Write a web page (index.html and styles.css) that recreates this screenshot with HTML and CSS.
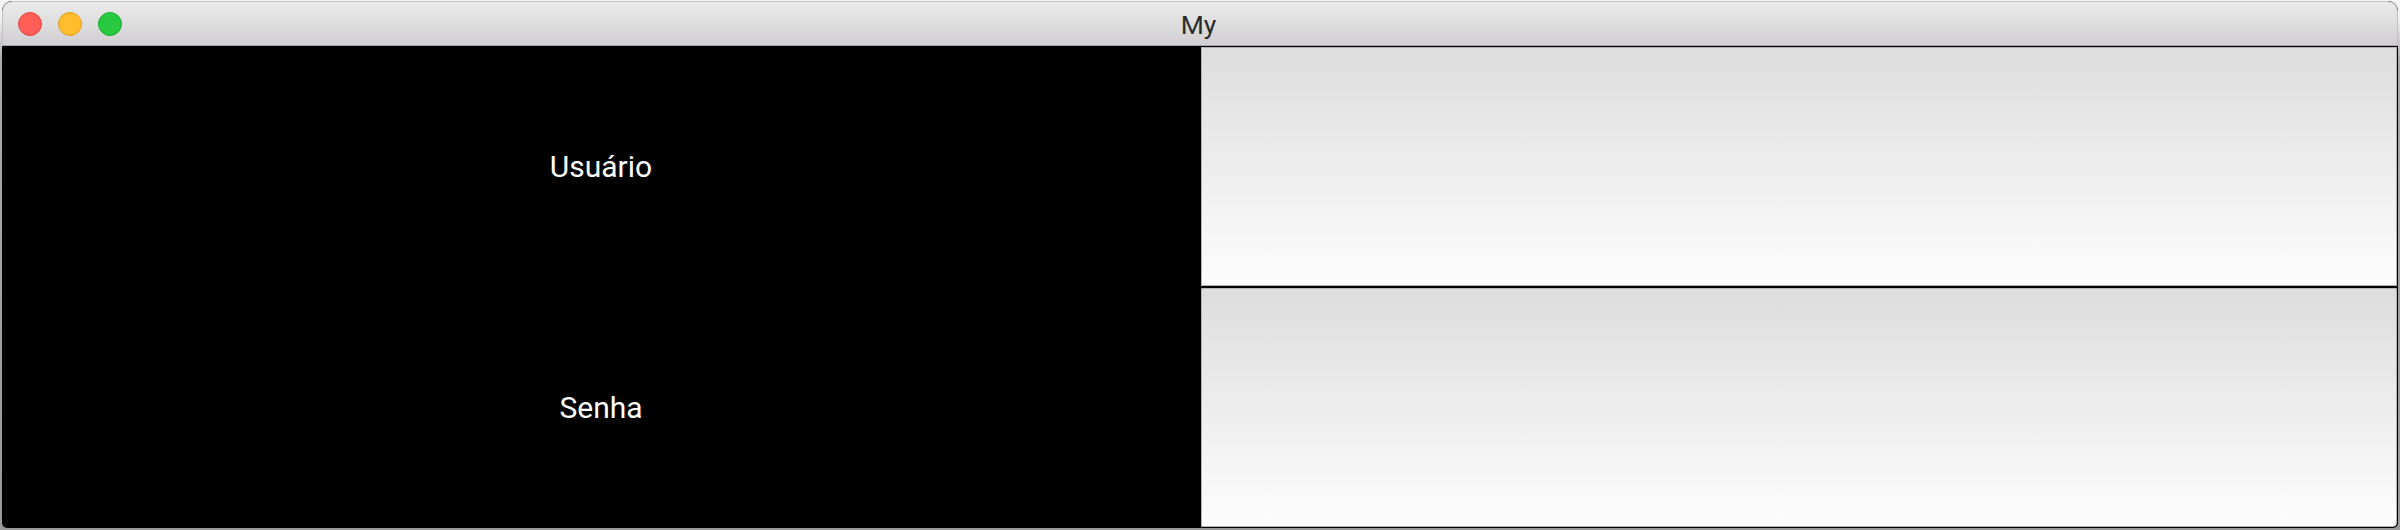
FILE: index.html
```html
<!DOCTYPE html>
<html lang="pt">
<head>
<meta charset="utf-8">
<title>My</title>
<link rel="stylesheet" href="styles.css">
</head>
<body>
<div class="window">
  <header class="titlebar">
    <div class="controls">
      <span class="dot close"></span>
      <span class="dot minimize"></span>
      <span class="dot zoom"></span>
    </div>
    <h1 class="title">My</h1>
  </header>
  <main class="form">
    <label class="label" for="user"><span>Usuário</span></label>
    <input class="field" id="user" type="text">
    <label class="label" for="password"><span>Senha</span></label>
    <input class="field" id="password" type="password">
  </main>
</div>
</body>
</html>
```

FILE: styles.css
```css
* { box-sizing: border-box; }
body {
  margin: 0;
  height: 530px;
  padding: 1px 2px 2px;
  overflow: hidden;
  background: linear-gradient(#f5f5f5 0, #f0f0f0 20px, #aaa 60px, #999 100%);
  font-family: Roboto, "Liberation Sans", sans-serif;
}
.window {
  height: 527px;
  display: flex;
  flex-direction: column;
  overflow: hidden;
  border-radius: 10px 10px 5px 5px;
  background: #000;
}
.titlebar {
  height: 45px;
  flex: none;
  display: grid;
  grid-template-columns: 1fr auto 1fr;
  align-items: center;
  border: 1px solid #c2c2c2;
  border-bottom-color: #a5a3a5;
  border-radius: 10px 10px 0 0;
  background: linear-gradient(#ebebeb, #d1cfd1);
}
.controls {
  display: flex;
  gap: 16px;
  padding-left: 15px;
}
.dot {
  width: 24px;
  height: 24px;
  border-radius: 50%;
  border: 1px solid;
}
.close { background: #ff5f57; border-color: #e2463f; }
.minimize { background: #ffbd2e; border-color: #e09f23; }
.zoom { background: #28c940; border-color: #1bac2c; }
.title {
  margin: 0;
  font-size: 26.5px;
  line-height: 30px;
  font-weight: 400;
  color: #2b2b2b;
  padding: 3px 3px 0 0;
}
.form {
  flex: 1;
  display: grid;
  grid-template-columns: 1198px 1fr;
  grid-template-rows: 241px 241px;
}
.label {
  display: flex;
  align-items: center;
  justify-content: center;
  color: #fff;
  font-size: 30px;
}
.field {
  width: auto;
  min-width: 0;
  margin: 1px;
  padding: 0 8px;
  border: 1px solid #b4b4b4;
  border-radius: 0;
  outline: 0;
  background: linear-gradient(#ddd, #fdfdfd);
  font: inherit;
}
.field:last-child { border-bottom-right-radius: 4px; }
```
